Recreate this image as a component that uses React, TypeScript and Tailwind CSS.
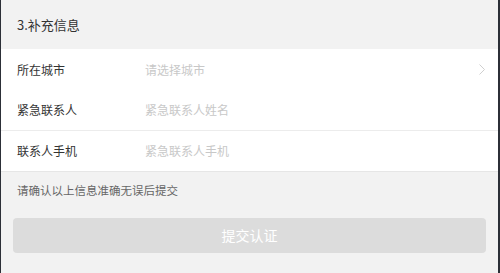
const rows = [
  { label: '所在城市', placeholder: '请选择城市', arrow: true, h: 'h-[41px]', line: false },
  { label: '紧急联系人', placeholder: '紧急联系人姓名', arrow: false, h: 'h-[40px]', line: false },
  { label: '联系人手机', placeholder: '紧急联系人手机', arrow: false, h: 'h-[41px]', line: true },
];

export default function App() {
  return (
    <div
      className="w-[500px] h-[273px] bg-[#f2f2f2] border-l border-r-2 border-[#2c2f37] overflow-hidden"
      style={{ fontFamily: '"Noto Sans CJK SC", "Noto Sans", sans-serif' }}
    >
      <div className="h-[49px] flex items-center pl-4 text-[13px] text-[#333]">3.补充信息</div>

      <div className="bg-white border-b border-[#e6e6e6]">
        {rows.map((r) => (
          <div
            key={r.label}
            className={`${r.h} flex items-center pl-4 pr-[13px] ${r.line ? 'border-t border-[#ececec]' : ''}`}
          >
            <span className="w-[128px] text-[12px] text-[#333]">{r.label}</span>
            <span className="flex-1 text-[12px] text-[#c8c8c8]">{r.placeholder}</span>
            {r.arrow && (
              <svg width="6" height="11" viewBox="0 0 6 11" fill="none">
                <path d="M0.5 0.5L5.5 5.5L0.5 10.5" stroke="#cfcfcf" strokeWidth="1" />
              </svg>
            )}
          </div>
        ))}
      </div>

      <div className="h-[38px] mb-[8px] flex items-center pl-4 text-[11.5px] text-[#666]">请确认以上信息准确无误后提交</div>

      <div className="px-[12px]">
        <button className="w-full h-[35px] rounded-[4px] bg-[#dcdcdc] text-white text-[14px] flex items-center justify-center">
          提交认证
        </button>
      </div>
    </div>
  );
}
